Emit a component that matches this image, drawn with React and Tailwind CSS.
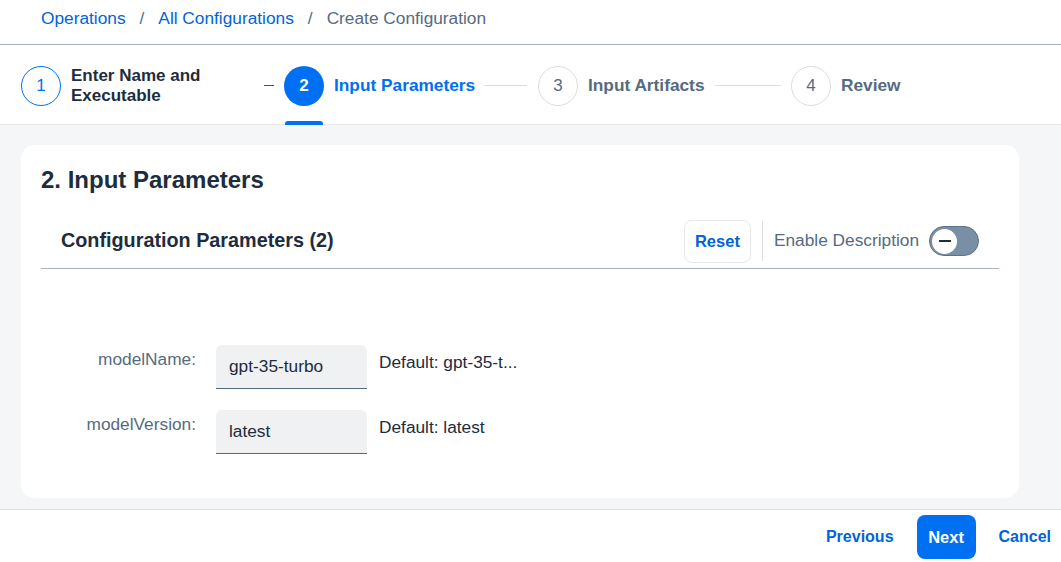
export default function App() {
  return (
    <div className="w-[1061px] h-[562px] flex flex-col bg-white font-['Liberation_Sans',Arial,sans-serif] text-[#1d2d3e] overflow-hidden">
      {/* Breadcrumb */}
      <div className="h-[45px] shrink-0 border-b border-[#a9b4be] flex items-start pt-[6px] pl-[41px] text-[17.3px] leading-[24px]">
        <span className="text-[#0064d9]">Operations</span>
        <span className="text-[#556b82] mx-[14px]">/</span>
        <span className="text-[#0064d9]">All Configurations</span>
        <span className="text-[#556b82] mx-[14px]">/</span>
        <span className="text-[#556b82]">Create Configuration</span>
      </div>

      {/* Stepper */}
      <div className="relative h-[80px] shrink-0 border-b border-[#e5e8ea] flex items-center pl-[21px] pt-[2px]">
        {/* Step 1 */}
        <div className="w-[263px] flex items-center">
          <div className="w-[40px] h-[40px] shrink-0 rounded-full border border-[#0070f2] text-[#0070f2] flex items-center justify-center text-[17px]">1</div>
          <div className="flex-1 ml-[10px] font-bold text-[17px] leading-[20px] text-[#1d2d3e]">Enter Name and<br />Executable</div>
          <div className="w-[10px] h-[1px] bg-[#0064d9] mx-[10px]" />
        </div>
        {/* Step 2 */}
        <div className="w-[254px] flex items-center">
          <div className="w-[40px] h-[40px] shrink-0 rounded-full bg-[#0070f2] text-white flex items-center justify-center text-[17px] font-bold">2</div>
          <div className="ml-[10px] font-bold text-[17.3px] text-[#0070f2] whitespace-nowrap">Input Parameters</div>
          <div className="flex-1 h-[1px] bg-[#d9dde1] ml-[10px] mr-[11px]" />
        </div>
        {/* Step 3 */}
        <div className="w-[253px] flex items-center">
          <div className="w-[40px] h-[40px] shrink-0 rounded-full border border-[#d9dde1] text-[#556b82] flex items-center justify-center text-[17px]">3</div>
          <div className="ml-[10px] font-bold text-[17.3px] text-[#556b82] whitespace-nowrap">Input Artifacts</div>
          <div className="flex-1 h-[1px] bg-[#d9dde1] ml-[10px] mr-[10px]" />
        </div>
        {/* Step 4 */}
        <div className="flex items-center">
          <div className="w-[40px] h-[40px] shrink-0 rounded-full border border-[#d9dde1] text-[#556b82] flex items-center justify-center text-[17px]">4</div>
          <div className="ml-[10px] font-bold text-[17.3px] text-[#556b82] whitespace-nowrap">Review</div>
        </div>
        <div className="absolute left-[285px] bottom-[-1px] w-[38px] h-[4px] rounded-t-[3px] bg-[#0070f2]" />
      </div>

      {/* Main */}
      <div className="flex-1 bg-[#f5f6f7] pt-[20px] pb-[11px] pl-[21px] pr-[42px] flex flex-col">
        <div className="flex-1 bg-white rounded-[14px] px-[20px] flex flex-col">
          <div className="pt-[21px] text-[24px] leading-[28px] font-bold text-[#1d2d3e]">2. Input Parameters</div>
          <div className="mt-[20px] h-[55px] border-b border-[#a9b4be] flex items-center pl-[20px] pr-[20px]">
            <div className="flex-1 text-[19.8px] font-bold text-[#1d2d3e]">Configuration Parameters (2)</div>
            <button className="h-[43px] w-[67px] rounded-[8px] border border-[#e5e8ea] text-[#0064d9] text-[16.5px] font-bold bg-white">Reset</button>
            <div className="w-[1px] h-[40px] bg-[#d9dde1] mx-[11px]" />
            <span className="text-[17.3px] text-[#556b82]">Enable Description</span>
            <div className="ml-[10px] w-[50px] h-[30px] rounded-full bg-[#788fa6] border border-[#5b738b] flex items-center pl-[2px]">
              <div className="w-[25px] h-[25px] rounded-full bg-white flex items-center justify-center">
                <div className="w-[12px] h-[2px] bg-[#1d2d3e]" />
              </div>
            </div>
          </div>

          <div className="pt-[76px] flex flex-col gap-[21px]">
            <div className="flex items-start">
              <div className="w-[155px] text-right pt-[3px] text-[17.3px] leading-[22px] text-[#556b82]">modelName:</div>
              <div className="ml-[20px] w-[151px] h-[44px] bg-[#eff1f2] rounded-t-[6px] border-b border-[#556b82] flex items-center pl-[13px] pt-[1px] text-[17.3px] text-[#1d2d3e]">gpt-35-turbo</div>
              <div className="ml-[12px] pt-[6px] text-[17.3px] leading-[22px] text-[#1d2d3e]">Default: gpt-35-t...</div>
            </div>
            <div className="flex items-start">
              <div className="w-[155px] text-right pt-[3px] text-[17.3px] leading-[22px] text-[#556b82]">modelVersion:</div>
              <div className="ml-[20px] w-[151px] h-[44px] bg-[#eff1f2] rounded-t-[6px] border-b border-[#556b82] flex items-center pl-[13px] pt-[1px] text-[17.3px] text-[#1d2d3e]">latest</div>
              <div className="ml-[12px] pt-[6px] text-[17.3px] leading-[22px] text-[#1d2d3e]">Default: latest</div>
            </div>
          </div>
        </div>
      </div>

      {/* Footer */}
      <div className="h-[53px] shrink-0 border-t border-[#d9dde1] bg-white flex items-center justify-end pt-[2px]">
        <button className="text-[16px] font-bold text-[#0064d9] px-[10px] h-[44px]">Previous</button>
        <button className="ml-[13px] h-[44px] w-[59px] rounded-[8px] bg-[#0070f2] text-white text-[16.5px] font-bold">Next</button>
        <button className="ml-[13px] text-[16px] font-bold text-[#0064d9] px-[10px] h-[44px]">Cancel</button>
      </div>
    </div>
  );
}
